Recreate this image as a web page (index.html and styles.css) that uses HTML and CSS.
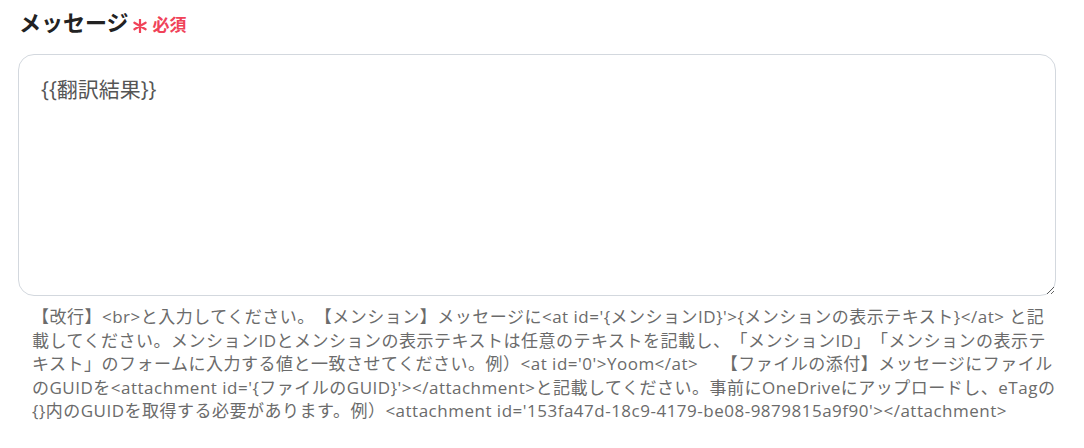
FILE: index.html
```html
<!DOCTYPE html>
<html lang="ja">
<head>
    <meta charset="UTF-8">
    <meta name="viewport" content="width=device-width, initial-scale=1.0">
    <title>メッセージ</title>
    <link rel="stylesheet" href="styles.css">
</head>
<body>
    <div class="field">
        <label class="field-label" for="message">
            メッセージ<span class="required"><svg class="mark" width="14" height="14" viewBox="0 0 14 14"><path d="M7 0.5V13.5M1.4 3.75L12.6 10.25M1.4 10.25L12.6 3.75" stroke="currentColor" stroke-width="2.2" stroke-linecap="round"/></svg>必須</span>
        </label>
        <textarea id="message" class="field-input">{{翻訳結果}}</textarea>
        <p class="field-help">【改行】&lt;br&gt;と入力してください。【メンション】メッセージに&lt;at id='{メンションID}'&gt;{メンションの表示テキスト}&lt;/at&gt; と記載してください。メンションIDとメンションの表示テキストは任意のテキストを記載し、「メンションID」「メンションの表示テキスト」のフォームに入力する値と一致させてください。例）&lt;at id='0'&gt;Yoom&lt;/at&gt;　 【ファイルの添付】メッセージにファイルのGUIDを&lt;attachment id='{ファイルのGUID}'&gt;&lt;/attachment&gt;と記載してください。事前にOneDriveにアップロードし、eTagの{}内のGUIDを取得する必要があります。例）&lt;attachment id='153fa47d-18c9-4179-be08-9879815a9f90'&gt;&lt;/attachment&gt;</p>
    </div>
</body>
</html>
```

FILE: styles.css
```css
body {
    margin: 0;
    padding: 6px 28px 0 18px;
    font-family: "Open Sans", "Noto Sans CJK JP", sans-serif;
    text-spacing-trim: space-all;
    background: #fff;
}
.field {
    display: flex;
    flex-direction: column;
}
.field-label {
    display: flex;
    align-items: center;
    height: 32px;
    padding-left: 1px;
    font-size: 22px;
    line-height: 32px;
    font-weight: bold;
    color: #222;
}
.required {
    display: flex;
    align-items: center;
    margin-left: 4px;
    margin-top: 5px;
    font-size: 17px;
    line-height: 20px;
    color: #f04359;
}
.mark {
    margin-right: 6px;
    margin-top: 2px;
}
.field-input {
    box-sizing: border-box;
    width: 100%;
    height: 242px;
    margin-top: 16px;
    padding: 18px 22px;
    border: 1px solid #d3d8de;
    border-radius: 16px;
    font-family: inherit;
    font-size: 21px;
    color: #555;
    resize: vertical;
    outline: none;
}
.field-help {
    margin: 9px 0 0 14px;
    font-size: 17px;
    line-height: 23.5px;
    letter-spacing: 0.5px;
    color: #6b6b6b;
}
```
